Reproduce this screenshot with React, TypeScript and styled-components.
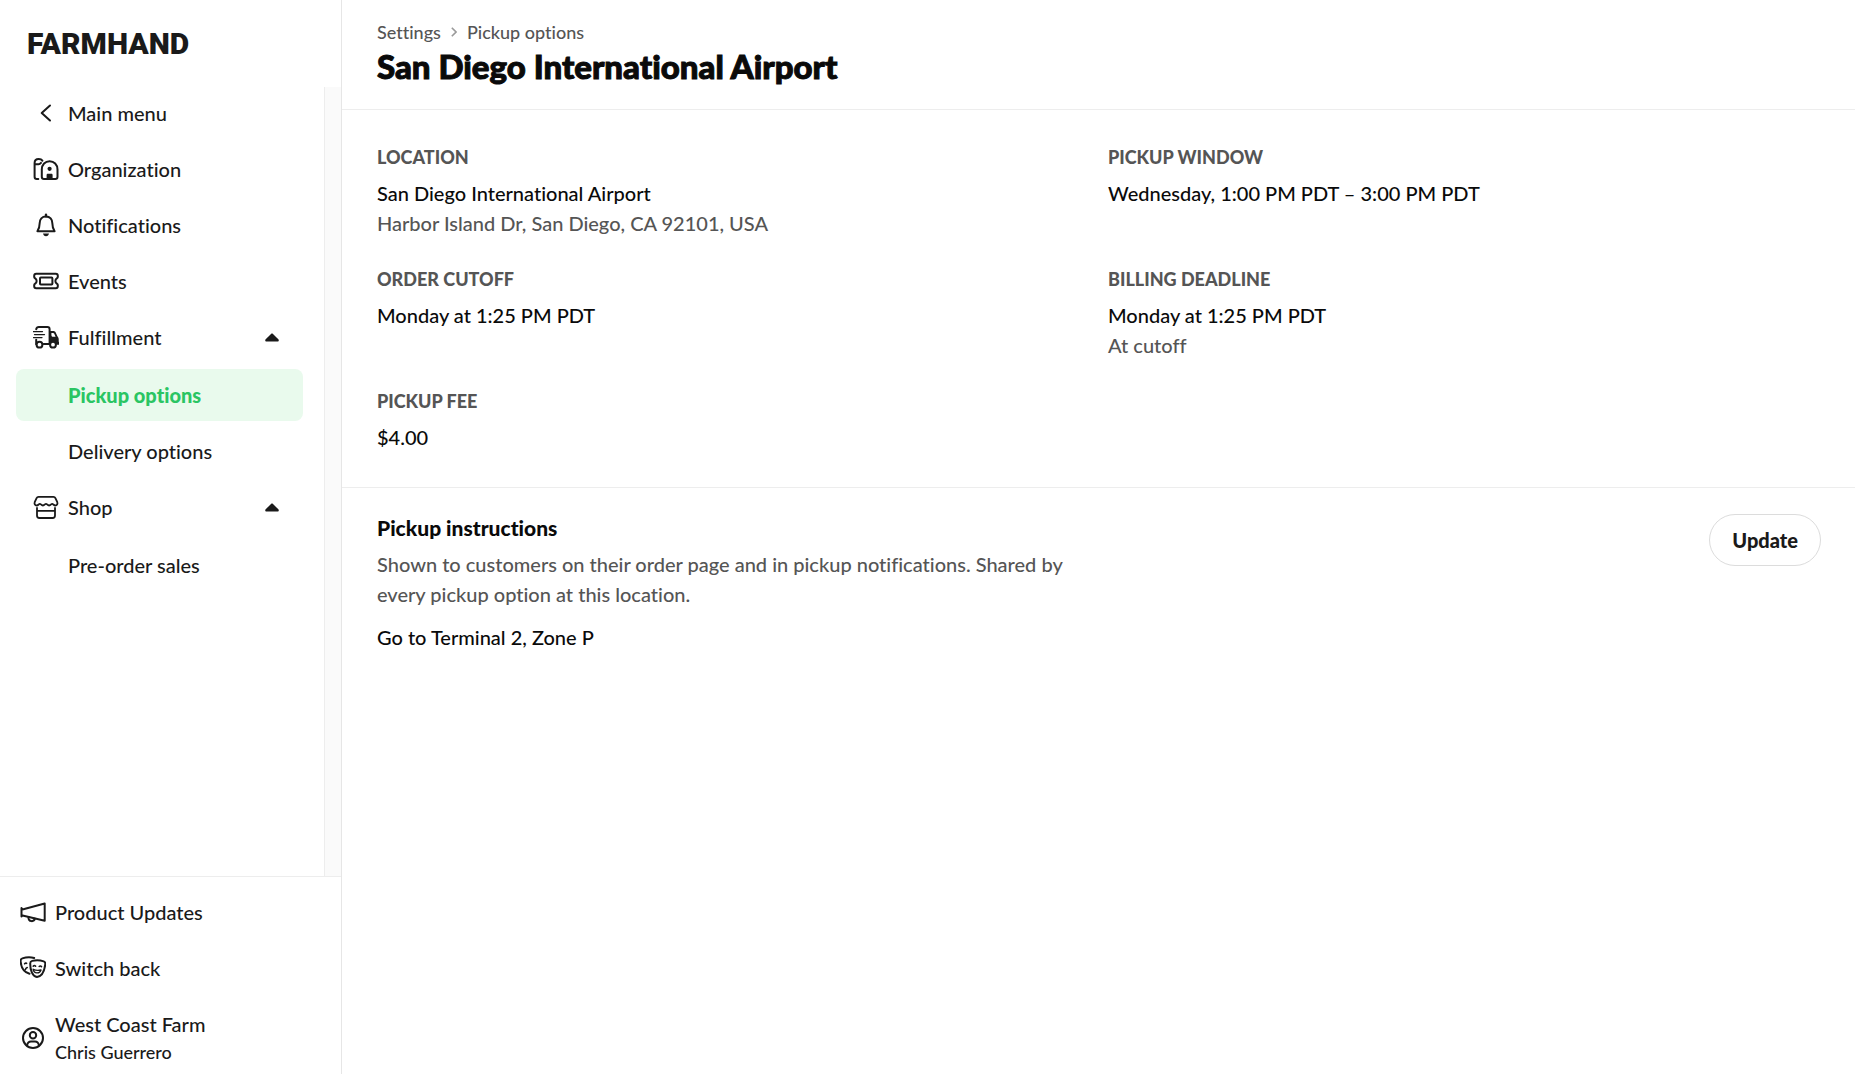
import React, { useState } from "react";
import styled, { createGlobalStyle, css } from "styled-components";

const color = {
  ink: "#1a1a1a",
  black: "#0a0a0a",
  muted: "#555555",
  faint: "#9a9a9a",
  line: "#ededed",
  gutter: "#fafafa",
  green: "#2ac563",
  greenTint: "#e9faed",
};

const font = {
  text: `"Lato Medium", Lato, "Liberation Sans", sans-serif`,
  heavy: `"Lato Black", Lato, "Liberation Sans", sans-serif`,
  brand: `Roboto, "Liberation Sans", sans-serif`,
};

const GlobalStyle = createGlobalStyle`
  *, *::before, *::after { box-sizing: border-box; }
  body {
    margin: 0;
    background: #ffffff;
    color: ${color.black};
    font-family: ${font.text};
    font-size: 20px;
    font-weight: 500;
    font-variant-ligatures: none;
    line-height: 30px;
  }
  h1, h2, p, dl, dt, dd, ul, ol { margin: 0; padding: 0; }
  ul, ol { list-style: none; }
  a { color: inherit; text-decoration: none; }
  button { font: inherit; font-variant-ligatures: none; color: inherit; cursor: pointer; }
`;

const heavyText = css`
  font-family: ${font.heavy};
  font-weight: 900;
`;

const Shell = styled.div`
  display: flex;
  min-height: 100vh;
`;

const Sidebar = styled.aside`
  position: sticky;
  top: 0;
  display: flex;
  flex: 0 0 342px;
  flex-direction: column;
  height: 100vh;
  border-right: 1px solid #e6e6e6;
  color: ${color.ink};
`;

const Brand = styled.a`
  display: flex;
  align-items: center;
  flex: none;
  height: 87px;
  padding-left: 27px;
  font-family: ${font.brand};
  font-size: 30px;
  font-weight: 900;
  line-height: 36px;
`;

const NavArea = styled.div`
  display: flex;
  flex: 1;
  min-height: 0;
`;

const Nav = styled.nav`
  flex: 1;
  padding: 0 21px 0 16px;
  overflow: hidden;
`;

const NavList = styled.ul`
  display: grid;
  gap: 4px;
`;

const SubList = styled.ul`
  display: grid;
  gap: 4px;
  padding-top: 6px;
`;

const ScrollGutter = styled.div`
  width: 17px;
  border-left: 1px solid ${color.line};
  background: ${color.gutter};
`;

const rowStyle = css`
  display: flex;
  align-items: center;
  gap: 9px;
  width: 100%;
  height: 52px;
  border: 0;
  border-radius: 8px;
  background: transparent;
  text-align: left;
`;

const NavLink = styled.a<{ $nested?: boolean; $active?: boolean }>`
  ${rowStyle}
  padding-left: ${(p) => (p.$nested ? 52 : 17)}px;
  ${(p) =>
    p.$active &&
    css`
      ${heavyText}
      background: ${color.greenTint};
      color: ${color.green};
    `}
`;

const NavToggle = styled.button`
  ${rowStyle}
  padding: 0 24px 0 17px;
`;

const ToggleLabel = styled.span`
  flex: 1;
`;

const Caret = styled.svg<{ $open: boolean }>`
  width: 14px;
  height: 9px;
  transform: rotate(${(p) => (p.$open ? 0 : 180)}deg);
`;

const Footer = styled.ul`
  display: grid;
  flex: none;
  gap: 4px;
  padding: 9px 16px 8px 20px;
  border-top: 1px solid ${color.line};
`;

const FooterLink = styled.a`
  ${rowStyle}
`;

const Account = styled.button`
  ${rowStyle}
  height: auto;
  padding: 12px 0 0;
  line-height: 28px;
`;

const AccountText = styled.span`
  display: grid;
`;

const AccountUser = styled.span`
  font-size: 18px;
`;

const IconBox = styled.svg`
  flex: none;
  width: 26px;
  height: 26px;
  fill: none;
  stroke: currentColor;
  stroke-width: 2;
  stroke-linecap: round;
  stroke-linejoin: round;
`;

const Main = styled.main`
  flex: 1;
  min-width: 0;
`;

const Header = styled.header`
  padding: 20px 35px 21px;
  border-bottom: 1px solid ${color.line};
`;

const Crumbs = styled.ol`
  display: flex;
  align-items: center;
  gap: 10px;
  color: ${color.muted};
  font-size: 18px;
  line-height: 24px;
`;

const Crumb = styled.li`
  display: flex;
  align-items: center;
  gap: 10px;
`;

const CrumbArrow = styled.svg`
  width: 6px;
  height: 10px;
  fill: none;
  stroke: ${color.faint};
  stroke-width: 1.6;
`;

const Title = styled.h1`
  ${heavyText}
  font-size: 33px;
  line-height: 44px;
  -webkit-text-stroke: 1px currentColor;
`;

const Details = styled.dl`
  display: grid;
  grid-template-columns: 1fr 1fr;
  gap: 29px 19px;
  padding: 35px;
  border-bottom: 1px solid ${color.line};
`;

const Label = styled.dt`
  ${heavyText}
  margin-bottom: 9px;
  color: ${color.muted};
  font-size: 18px;
  line-height: 24px;
  text-transform: uppercase;
`;

const Note = styled.p`
  color: ${color.muted};
`;

const Instructions = styled.section`
  display: flex;
  align-items: flex-start;
  justify-content: space-between;
  padding: 26px 34px 26px 35px;
`;

const InstructionsText = styled.div`
  display: grid;
  gap: 7px;
  max-width: 700px;
`;

const SectionTitle = styled.h2`
  ${heavyText}
  font-size: 21px;
  line-height: 28px;
`;

const InstructionsBody = styled.p`
  padding-top: 6px;
`;

const PillButton = styled.button`
  ${heavyText}
  height: 52px;
  padding: 0 22px;
  border: 1px solid #dcdcdc;
  border-radius: 26px;
  background: #ffffff;
  color: ${color.ink};
`;

type IconName =
  | "back"
  | "barn"
  | "bell"
  | "ticket"
  | "truck"
  | "shop"
  | "megaphone"
  | "masks"
  | "user";

const shapes: Record<IconName, React.ReactNode> = {
  back: <path d="M17 5.5 8.7 13l8.3 7.5" />,
  barn: (
    <>
      <path d="M9.4 4.6C8.6 3.4 7.3 3 5.7 3 3.2 3 1.6 4.5 1.6 7v13.8c0 1.4.8 2.2 2.2 2.2h1.5" />
      <path d="M2 8.2h3.6c1.1 0 1.6-.4 2.4-1.3" />
      <path d="M8.8 13.5c0-5 3.4-8.3 7.8-8.3s7.900 3.300 7.900 8.300v7.300c0 1.400-.8 2.200-2.200 2.200H11c-1.400 0-2.200-.8-2.200-2.200z" />
      <circle cx="16.6" cy="12.8" r="2.1" fill="currentColor" stroke="none" />
      <path d="M13.600 23v-4c0-.8.5-1.300 1.300-1.300h3.400c.8 0 1.300.5 1.300 1.300v4z" fill="currentColor" stroke="none" />
    </>
  ),
  bell: (
    <>
      <path d="M13 4.400c-4 0-6.300 2.900-6.300 6.600 0 4-.5 5.300-2.300 8.200h17.200c-1.800-2.900-2.300-4.200-2.300-8.200 0-3.700-2.300-6.600-6.300-6.600z" />
      <path d="M13 2.700v1.500" strokeWidth="2.4" />
      <path d="M10 21.600h6c-.3 1.700-1.400 2.600-3 2.600s-2.700-.9-3-2.600z" fill="currentColor" stroke="none" />
    </>
  ),
  ticket: (
    <>
      <path d="M3.200 5.700h19.600c1.300 0 2 .7 2 2v1.200c0 .8-.4 1.100-1 1.500-1.900 1.300-1.900 3.900 0 5.200.6.400 1 .7 1 1.500v1.200c0 1.300-.7 2-2 2H3.200c-1.300 0-2-.7-2-2v-1.200c0-.8.4-1.100 1-1.500 1.900-1.300 1.900-3.900 0-5.200-.6-.4-1-.7-1-1.500V7.700c0-1.300.7-2 2-2z" />
      <rect x="7" y="9.6" width="12.4" height="6.900" rx=".8" />
    </>
  ),
  truck: (
    <>
      <path d="M3.200 5.300c.3-1.500 1.200-2.300 2.700-2.300h8.500c1.400 0 2.200.8 2.200 2.200V20h-6" />
      <path d="M0 7.600h9.500M1.500 10.600h10M.5 13.600h8.500" strokeWidth="1.3" />
      <path d="M3.200 15.800v4.400" />
      <path d="M17 7h3.200c1.200 0 2 .5 2.500 1.500l1.700 3.700c.9 1 1.300 1.800 1.300 3v2.600c.7.400.9 1 .9 1.700 0 .9-.5 1.300-1.300 1.300H17z" fill="currentColor" stroke="none" />
      <path d="M18.400 9h1.700c.5 0 .8.200 1 .6l1.500 3.200h-2.300c-1.200 0-1.900-.7-1.900-1.900z" fill="#fff" stroke="none" />
      <circle cx="6.5" cy="20.7" r="2.9" fill="#fff" />
      <circle cx="20" cy="20.7" r="2.9" fill="#fff" />
    </>
  ),
  shop: (
    <>
      <path d="M5.500 2.900h15c.9 0 1.500.3 1.900 1.200l1.900 4.100c.6 1.800-.4 3.300-2 3.300-1.500 0-2.200-1.700-3.100-1.700s-1.500 1.700-3.100 1.700-2.200-1.700-3.100-1.700-1.500 1.700-3.100 1.700-2.200-1.700-3.100-1.700-1.600 1.700-3.100 1.700c-1.600 0-2.600-1.500-2-3.300l1.900-4.100c.4-.9 1-1.200 1.900-1.200z" strokeWidth="1.8" />
      <path d="M4 14v7.500C4 23 4.800 24 6.400 24h13.200c1.600 0 2.400-1 2.400-2.500V14M4.500 16.900h17" strokeWidth="1.8" />
    </>
  ),
  megaphone: (
    <>
      <path d="M1.500 9v8.500M1.500 10.700 24.700 4.500v17.300L1.500 16.300z" />
      <path d="M8.500 18c-.3 2.300.9 3.900 2.800 4.100 1.800.2 3.200-.7 3.700-2.500" />
    </>
  ),
  masks: (
    <>
      <path d="M9.500 18.800C4.600 17.600 1.200 13.500.6 6.400.4 4.800 1 3.900 2.400 3.400 6.200 2.100 10.400 1.900 14.200 3" />
      <path
        d="M10.200 8.700c-.1-1.500.6-2.400 2-2.800 3.800-1 7.800-.8 11.500.5 1.300.5 1.800 1.400 1.600 2.800-.8 6.600-3.600 12.300-8.300 12.900-4.500-.7-6.800-6.700-6.800-13.400z"
      />
      <path
        d="M4.600 8.800c.6-.6 1.200-.8 2-.5M5.400 14.400c.3-1 .9-1.500 1.800-1.800M13.200 11.200c.7-.9 1.700-.9 2.400 0M19.200 11.500c.7-.8 1.700-.7 2.300.2"
        strokeWidth="1.6"
      />
      <path d="M13.200 14.300c2.500 1.200 5.100 1.400 7.800.6-.7 2-2.200 3.100-4.100 3-2-.1-3.300-1.400-3.700-3.600z" strokeWidth="1.4" />
    </>
  ),
  user: (
    <>
      <circle cx="13" cy="13" r="10" />
      <circle cx="13" cy="10.3" r="3.2" />
      <path d="M7 20.400c.5-2.700 2-3.900 4-3.900h4c2 0 3.500 1.200 4 3.900" />
    </>
  ),
};

const Icon = ({ name }: { name: IconName }) => (
  <IconBox viewBox="0 0 26 26" aria-hidden="true">
    {shapes[name]}
  </IconBox>
);

type NavItem = {
  label: string;
  icon: IconName;
  children?: { label: string; active?: boolean }[];
};

const navItems: NavItem[] = [
  { label: "Main menu", icon: "back" },
  { label: "Organization", icon: "barn" },
  { label: "Notifications", icon: "bell" },
  { label: "Events", icon: "ticket" },
  {
    label: "Fulfillment",
    icon: "truck",
    children: [{ label: "Pickup options", active: true }, { label: "Delivery options" }],
  },
  { label: "Shop", icon: "shop", children: [{ label: "Pre-order sales" }] },
];

const details = [
  {
    label: "Location",
    value: "San Diego International Airport",
    note: "Harbor Island Dr, San Diego, CA 92101, USA",
  },
  { label: "Pickup window", value: "Wednesday, 1:00 PM PDT – 3:00 PM PDT" },
  { label: "Order cutoff", value: "Monday at 1:25 PM PDT" },
  { label: "Billing deadline", value: "Monday at 1:25 PM PDT", note: "At cutoff" },
  { label: "Pickup fee", value: "$4.00" },
];

const NavGroup = ({ item }: { item: NavItem }) => {
  const [open, setOpen] = useState(true);
  return (
    <li>
      <NavToggle type="button" aria-expanded={open} onClick={() => setOpen(!open)}>
        <Icon name={item.icon} />
        <ToggleLabel>{item.label}</ToggleLabel>
        <Caret $open={open} viewBox="0 0 14 9" aria-hidden="true">
          <path
            d="M6 .9c.6-.6 1.400-.6 2 0l5.300 5.400c.9 1 .5 2.200-.9 2.200H1.600C.2 8.500-.2 7.300.7 6.300z"
            fill="currentColor"
          />
        </Caret>
      </NavToggle>
      {open && (
        <SubList>
          {item.children?.map((child) => (
            <li key={child.label}>
              <NavLink
                href="#"
                $nested
                $active={child.active}
                aria-current={child.active ? "page" : undefined}
              >
                {child.label}
              </NavLink>
            </li>
          ))}
        </SubList>
      )}
    </li>
  );
};

export default function App() {
  return (
    <>
      <GlobalStyle />
      <Shell>
        <Sidebar>
          <Brand href="#">FARMHAND</Brand>
          <NavArea>
            <Nav aria-label="Settings">
              <NavList>
                {navItems.map((item) =>
                  item.children ? (
                    <NavGroup key={item.label} item={item} />
                  ) : (
                    <li key={item.label}>
                      <NavLink href="#">
                        <Icon name={item.icon} />
                        {item.label}
                      </NavLink>
                    </li>
                  )
                )}
              </NavList>
            </Nav>
            <ScrollGutter />
          </NavArea>
          <Footer>
            <li>
              <FooterLink href="#">
                <Icon name="megaphone" />
                Product Updates
              </FooterLink>
            </li>
            <li>
              <FooterLink href="#">
                <Icon name="masks" />
                Switch back
              </FooterLink>
            </li>
            <li>
              <Account type="button">
                <Icon name="user" />
                <AccountText>
                  <span>West Coast Farm</span>
                  <AccountUser>Chris Guerrero</AccountUser>
                </AccountText>
              </Account>
            </li>
          </Footer>
        </Sidebar>
        <Main>
          <Header>
            <nav aria-label="Breadcrumb">
              <Crumbs>
                <Crumb>
                  <a href="#">Settings</a>
                  <CrumbArrow viewBox="0 0 6 10" aria-hidden="true">
                    <path d="m.8.8 4.200 4.200L.8 9.200" />
                  </CrumbArrow>
                </Crumb>
                <Crumb>
                  <a href="#">Pickup options</a>
                </Crumb>
              </Crumbs>
            </nav>
            <Title>San Diego International Airport</Title>
          </Header>
          <Details>
            {details.map((entry) => (
              <div key={entry.label}>
                <Label>{entry.label}</Label>
                <dd>
                  <p>{entry.value}</p>
                  {entry.note && <Note>{entry.note}</Note>}
                </dd>
              </div>
            ))}
          </Details>
          <Instructions>
            <InstructionsText>
              <SectionTitle>Pickup instructions</SectionTitle>
              <Note>
                Shown to customers on their order page and in pickup notifications. Shared by every
                pickup option at this location.
              </Note>
              <InstructionsBody>Go to Terminal 2, Zone P</InstructionsBody>
            </InstructionsText>
            <PillButton type="button">Update</PillButton>
          </Instructions>
        </Main>
      </Shell>
    </>
  );
}
